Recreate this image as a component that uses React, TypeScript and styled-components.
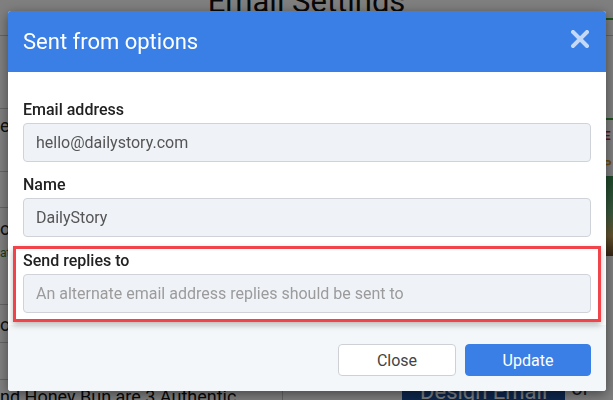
import React from 'react';
import styled, { createGlobalStyle } from 'styled-components';

const GlobalStyle = createGlobalStyle`
  html, body {
    margin: 0;
    padding: 0;
    width: 613px;
    height: 400px;
    overflow: hidden;
    background: #fff;
    font-family: Roboto, "Liberation Sans", Arial, sans-serif;
  }
  * { box-sizing: border-box; }
`;

/* ---------- page behind the dialog ---------- */

const Page = styled.div`
  width: 613px;
  height: 400px;
  overflow: hidden;
  color: #111;
`;

const PageTitle = styled.h1`
  margin: -20px 0 0;
  height: 56px;
  font-size: 31px;
  font-weight: 400;
  line-height: 44px;
  text-align: center;
  border-bottom: 1px solid #c8c8c8;
`;

const Columns = styled.div`
  display: grid;
  grid-template-columns: 283px 1fr 10px;
`;

const LeftCol = styled.div`
  display: flex;
  flex-direction: column;
  border-right: 1px solid #c8c8c8;
`;

const Row = styled.div<{ $h: number; $pad?: number }>`
  height: ${(p) => p.$h}px;
  padding-top: ${(p) => p.$pad ?? 0}px;
  display: flex;
  flex-direction: column;
  gap: 6px;
  border-bottom: 1px solid #c8c8c8;
  white-space: nowrap;
`;

const RowText = styled.span<{ $tone?: string; $size?: number }>`
  font-size: ${(p) => p.$size ?? 18}px;
  line-height: 1.2;
  color: ${(p) => p.$tone ?? '#222'};
`;

const BottomText = styled.div`
  padding-top: 6px;
  font-size: 18px;
  line-height: 22px;
  white-space: nowrap;
`;

const MidCol = styled.div`
  display: flex;
  flex-direction: column;
  justify-content: flex-end;
`;

const DesignRow = styled.div`
  display: flex;
  align-items: flex-start;
  gap: 6px;
  padding-left: 119px;
  margin-bottom: -16px;
`;

const DesignButton = styled.div`
  width: 177px;
  height: 34px;
  background: #1d4f9c;
  color: #fff;
  font-size: 22px;
  display: flex;
  align-items: center;
  justify-content: center;
`;

const OrText = styled.span`
  font-size: 20px;
  color: #234;
  padding-top: 2px;
`;

const RightStrip = styled.div`
  display: flex;
  flex-direction: column;
`;

const StripLine = styled.div<{ $top: number }>`
  margin-top: ${(p) => p.$top}px;
  height: 2px;
  background: #3aa63a;
`;

const StripLetter = styled.div<{ $color: string; $top: number }>`
  margin-top: ${(p) => p.$top}px;
  font-size: 13px;
  font-weight: 700;
  color: ${(p) => p.$color};
`;

const StripImage = styled.div`
  margin-top: 4px;
  height: 80px;
  background: linear-gradient(180deg, #3b8f55 0%, #6fb07a 45%, #c9a55a 75%, #6a4b2a 100%);
`;

/* ---------- overlay and dialog ---------- */

const Backdrop = styled.div`
  position: fixed;
  inset: 0;
  background: rgba(0, 0, 0, 0.5);
`;

const Dialog = styled.div`
  position: absolute;
  left: 8px;
  top: 11px;
  width: 598px;
  background: #fff;
  border-radius: 3px;
  overflow: hidden;
  box-shadow: 0 3px 12px rgba(0, 0, 0, 0.45);
`;

const Header = styled.div`
  height: 61px;
  background: #3a7fe6;
  display: flex;
  align-items: center;
  justify-content: space-between;
  padding: 0 17px 0 15px;
`;

const Title = styled.h4`
  margin: 0;
  font-size: 22px;
  font-weight: 400;
  color: #fff;
`;

const CloseX = styled.button`
  border: 0;
  padding: 0;
  background: none;
  width: 18px;
  height: 18px;
  margin-top: -6px;
  opacity: 0.7;
  display: flex;
`;

const Body = styled.div`
  padding: 28px 15px 12px;
  display: flex;
  flex-direction: column;
  gap: 13px;
`;

const Group = styled.div<{ $highlight?: boolean }>`
  display: flex;
  flex-direction: column;
  gap: 3px;
  ${(p) =>
    p.$highlight &&
    `
    margin: -4px -10px -9px;
    padding: 2px 7px 6px;
    border: 3px solid #f0434a;
    box-shadow: 0 3px 6px rgba(0, 0, 0, 0.28);
  `}
`;

const Label = styled.label`
  font-size: 16px;
  line-height: 20px;
  font-weight: 500;
  color: #222;
`;

const Input = styled.input`
  height: 39px;
  width: 100%;
  padding: 0 12px;
  border: 1px solid #cfd3d9;
  border-radius: 4px;
  background: #eff2f7;
  font-family: inherit;
  font-size: 16px;
  color: #555;
  outline: none;
  &::placeholder {
    color: #9b9b9b;
  }
`;

const Footer = styled.div`
  background: #f4f7fa;
  padding: 19px 15px 15px;
  display: flex;
  justify-content: flex-end;
  gap: 9px;
`;

const Button = styled.button<{ $primary?: boolean; $w: number }>`
  width: ${(p) => p.$w}px;
  height: 32px;
  border-radius: 4px;
  font-family: inherit;
  font-size: 16px;
  cursor: pointer;
  border: 1px solid ${(p) => (p.$primary ? '#3a7fe6' : '#cdd1d6')};
  background: ${(p) => (p.$primary ? '#3a7fe6' : '#fff')};
  color: ${(p) => (p.$primary ? '#fff' : '#444')};
`;

const App: React.FC = () => {
  return (
    <>
      <GlobalStyle />
      <Page>
        <PageTitle>Email Settings</PageTitle>
        <Columns>
          <LeftCol>
            <Row $h={73} />
            <Row $h={63} $pad={6}>
              <RowText>e</RowText>
            </Row>
            <Row $h={36} />
            <Row $h={97} $pad={10}>
              <RowText>or</RowText>
              <RowText $tone="#2c7a3a" $size={12}>at</RowText>
            </Row>
            <Row $h={38} $pad={9}>
              <RowText>o(</RowText>
            </Row>
            <Row $h={37} />
            <BottomText>nd Honey Bun are 3 Authentic</BottomText>
          </LeftCol>
          <MidCol>
            <DesignRow>
              <DesignButton>Design Email</DesignButton>
              <OrText>or E</OrText>
            </DesignRow>
          </MidCol>
          <RightStrip>
            <StripLine $top={-18} />
            <StripLine $top={98} />
            <StripLetter $color="#c0282a" $top={8}>E</StripLetter>
            <StripLetter $color="#d59a1e" $top={14}>P</StripLetter>
            <StripImage />
          </RightStrip>
        </Columns>
      </Page>

      <Backdrop />

      <Dialog>
        <Header>
          <Title>Sent from options</Title>
          <CloseX aria-label="Close">
            <svg width="18" height="18" viewBox="0 0 18 18">
              <path d="M2 2 L16 16 M16 2 L2 16" stroke="#fff" strokeWidth="4" strokeLinecap="square" />
            </svg>
          </CloseX>
        </Header>
        <Body>
          <Group>
            <Label>Email address</Label>
            <Input defaultValue="hello@dailystory.com" />
          </Group>
          <Group>
            <Label>Name</Label>
            <Input defaultValue="DailyStory" />
          </Group>
          <Group $highlight>
            <Label>Send replies to</Label>
            <Input placeholder="An alternate email address replies should be sent to" />
          </Group>
        </Body>
        <Footer>
          <Button $w={118}>Close</Button>
          <Button $w={126} $primary>Update</Button>
        </Footer>
      </Dialog>
    </>
  );
};

export default App;
